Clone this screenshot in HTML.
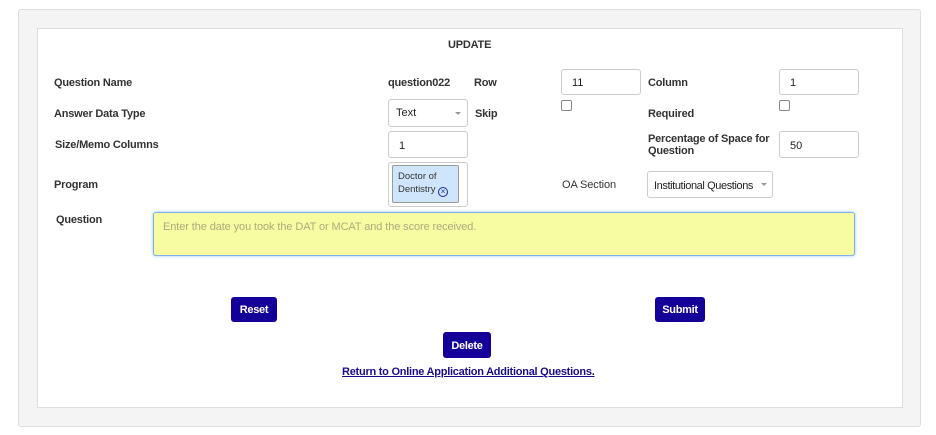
<!DOCTYPE html>
<html><head><style>
body{margin:0;width:936px;height:435px;background:#fff;font-family:"Liberation Sans",Arial,sans-serif;font-size:11px;color:#333;position:relative;overflow:hidden}
.a{position:absolute}
.outer{left:18px;top:9px;width:901px;height:416px;background:#f4f4f4;border:1px solid #ddd;border-radius:3px}
.inner{left:37px;top:28px;width:864px;height:378px;background:#fff;border:1px solid #ddd}
.l{position:absolute;font-weight:bold;line-height:12px;letter-spacing:-0.2px}
.in{position:absolute;border:1px solid #ccc;border-radius:3px;background:#fff;box-sizing:border-box;padding-left:10px;font-size:11px;color:#222;display:flex;align-items:center;padding-top:2px}
.cb{position:absolute;width:9px;height:9px;border:1px solid #888;border-radius:2px;background:#fff}
.btn{position:absolute;background:#140099;color:#fff;font-weight:bold;border-radius:3px;display:flex;align-items:center;justify-content:center;font-size:11px;letter-spacing:-0.3px;padding-top:1px;box-sizing:border-box}
.caret{position:absolute;width:0;height:0;border-left:3px solid transparent;border-right:3px solid transparent;border-top:3px solid #999}
</style></head><body>
<div class="a outer"></div>
<div class="a inner"></div>
<div class="l" style="left:448px;top:39px">UPDATE</div>
<div class="l" style="left:54px;top:77px">Question Name</div>
<div class="l" style="left:54px;top:108px">Answer Data Type</div>
<div class="l" style="left:55px;top:139px">Size/Memo Columns</div>
<div class="l" style="left:54px;top:179px">Program</div>
<div class="l" style="left:56px;top:214px">Question</div>
<div class="l" style="left:388px;top:77px">question022</div>
<div class="l" style="left:474px;top:77px">Row</div>
<div class="in" style="left:561px;top:69px;width:80px;height:26px">11</div>
<div class="l" style="left:648px;top:77px">Column</div>
<div class="in" style="left:779px;top:69px;width:80px;height:26px">1</div>
<div class="in" style="left:388px;top:99px;width:80px;height:28px;padding-left:7px;padding-top:0">Text</div>
<div class="caret" style="left:455px;top:112px"></div>
<div class="l" style="left:475px;top:108px">Skip</div>
<div class="cb" style="left:561px;top:100px"></div>
<div class="l" style="left:648px;top:108px">Required</div>
<div class="cb" style="left:779px;top:100px"></div>
<div class="in" style="left:388px;top:131px;width:80px;height:27px">1</div>
<div class="l" style="left:648px;top:133px">Percentage of Space for<br>Question</div>
<div class="in" style="left:779px;top:131px;width:80px;height:27px">50</div>
<div class="in" style="left:388px;top:162px;width:80px;height:45px"></div>
<div class="a" style="left:392px;top:165px;width:67px;height:38px;background:#cfe5fb;border:1px solid #999;border-radius:2px;box-sizing:border-box;font-size:9.5px;line-height:13px;padding:4px 0 0 5px;color:#333">Doctor of<br>Dentistry <span style="display:inline-block;width:8px;height:8px;border:1.5px solid #1a2aa0;border-radius:50%;font-size:8px;line-height:8px;text-align:center;color:#1a2aa0;vertical-align:-2px">×</span></div>
<div class="a" style="left:562px;top:179px;color:#333;letter-spacing:-0.1px">OA Section</div>
<div class="in" style="left:647px;top:171px;width:126px;height:27px;padding-left:6px;letter-spacing:-0.4px">Institutional Questions</div>
<div class="caret" style="left:761px;top:183px"></div>
<div class="a" style="left:153px;top:212px;width:702px;height:44px;box-sizing:border-box;background:#f7fba2;border:1px solid #7fb0ea;border-radius:3px;box-shadow:0 0 3px #9cc4f0;color:#a9ad7c;font-size:11px;padding:8px 9px;letter-spacing:-0.1px">Enter the date you took the DAT or MCAT and the score received.</div>
<div class="btn" style="left:231px;top:297px;width:46px;height:25px">Reset</div>
<div class="btn" style="left:655px;top:297px;width:50px;height:25px">Submit</div>
<div class="btn" style="left:443px;top:332px;width:48px;height:26px">Delete</div>
<div class="a" style="left:342px;top:366px;color:#1a0d8a;text-decoration:underline;font-weight:bold;font-size:11px;letter-spacing:-0.25px">Return to Online Application Additional Questions.</div>
</body></html>
